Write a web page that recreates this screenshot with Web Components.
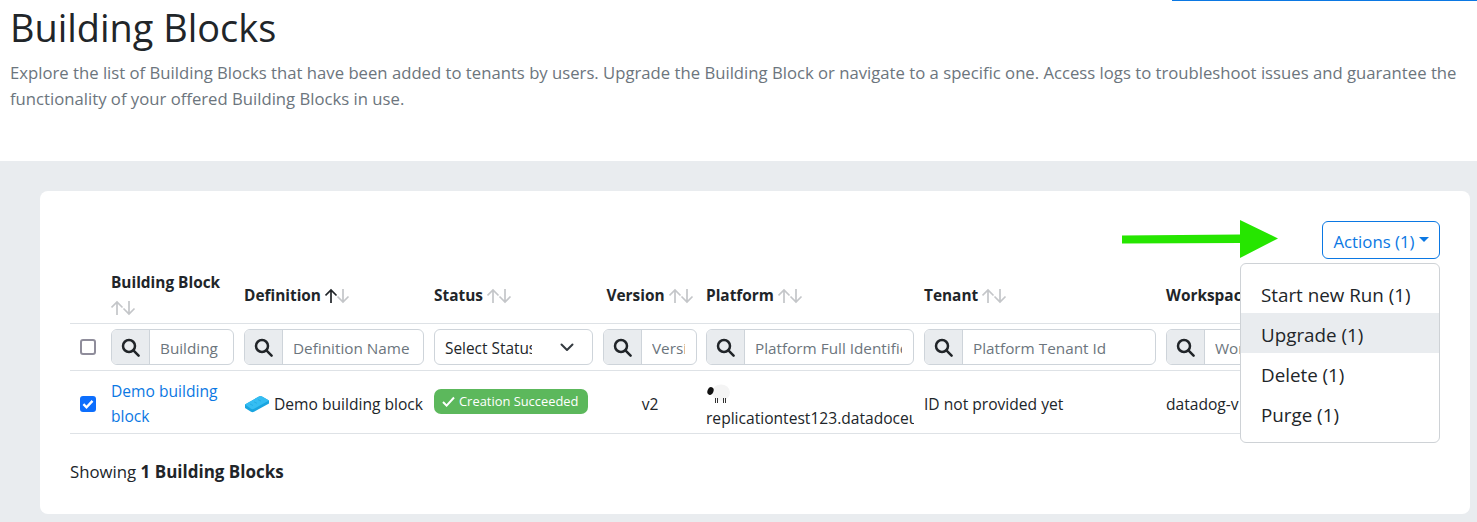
<!DOCTYPE html>
<html>
<head>
<meta charset="utf-8">
<title>Building Blocks</title>
<style>
  html, body { margin: 0; height: 100%; background: #fff; overflow: hidden; }
  body { font-family: "Open Sans", "Noto Sans", sans-serif; color: #212529; }
</style>
</head>
<body>
<page-head
  title="Building Blocks"
  text="Explore the list of Building Blocks that have been added to tenants by users. Upgrade the Building Block or navigate to a specific one. Access logs to troubleshoot issues and guarantee the functionality of your offered Building Blocks in use."></page-head>
<page-body>
  <blocks-card></blocks-card>
</page-body>

<script>
const SEARCH_ICON = `<svg width="19" height="19" viewBox="0 0 19 19" fill="none" stroke="#212529" stroke-width="2.5"><circle cx="8" cy="8" r="6"/><path d="M12.4 12.4l5.2 5.2" stroke-linecap="round"/></svg>`;

class PageHead extends HTMLElement {
  connectedCallback() {
    const shadow = this.attachShadow({ mode: "open" });
    shadow.innerHTML = `
    <style>
      :host { display: block; height: 161px; padding-left: 10px; position: relative; overflow: hidden; }
      h1 { margin: 0; padding-top: 3px; font-size: 37.9px; line-height: 48px; font-weight: 400; }
      p { margin: 9px 0 0; font-size: 16.7px; line-height: 26px; color: #6c757d; width: 1460px; }
      .topline { position: absolute; top: 0; right: 0; width: 305px; height: 1px; background: #0b78e3; }
    </style>
    <div class="topline"></div>
    <h1>${this.getAttribute("title")}</h1>
    <p>${this.getAttribute("text")}</p>`;
  }
}

class PageBody extends HTMLElement {
  connectedCallback() {
    const shadow = this.attachShadow({ mode: "open" });
    shadow.innerHTML = `
    <style>
      :host { display: block; background: #e9ecef; padding: 30px 7px 8px 40px; }
    </style>
    <slot></slot>`;
  }
}

class SortArrows extends HTMLElement {
  connectedCallback() {
    const active = this.hasAttribute("active");
    const shadow = this.attachShadow({ mode: "open" });
    shadow.innerHTML = `
    <style>
      :host { display: inline-block; width: 25px; height: 16px; vertical-align: -3px; }
      svg { display: block; }
    </style>
    <svg width="25" height="16" viewBox="0 0 25 16" fill="none" stroke-width="1.7">
      <path d="M6 15V2M.5 7.500L6 2l5.500 5.500" stroke="${active ? "#212529" : "#c4c6c9"}"/>
      <path d="M18 1v13M12.500 8.500L18 14l5.500-5.500" stroke="#c4c6c9"/>
    </svg>`;
  }
}

class SearchBox extends HTMLElement {
  connectedCallback() {
    const shadow = this.attachShadow({ mode: "open" });
    shadow.innerHTML = `
    <style>
      :host { display: flex; height: 36px; box-sizing: border-box; border: 1px solid #ced4da; border-radius: 6px; overflow: hidden; background: #fff; }
      .addon { flex: 0 0 38px; display: flex; align-items: center; justify-content: center; background: #e9ecef; border-right: 1px solid #ced4da; box-sizing: border-box; }
      input { flex: 1; min-width: 0; border: 0; outline: 0; padding: 2px 0 0 10px; margin-right: 11px; font: inherit; font-size: 15.3px; background: transparent; color: #212529; }
      input::placeholder { color: #6c757d; opacity: 1; }
    </style>
    <div class="addon">${SEARCH_ICON}</div>
    <input type="text" placeholder="${this.getAttribute("placeholder")}">`;
  }
}

class StatusSelect extends HTMLElement {
  connectedCallback() {
    const shadow = this.attachShadow({ mode: "open" });
    shadow.innerHTML = `
    <style>
      :host { display: flex; align-items: center; height: 36px; box-sizing: border-box; border: 1px solid #ced4da; border-radius: 6px; padding: 0 17px 0 10px; font-size: 15.4px; }
      span { flex: 1; overflow: hidden; white-space: nowrap; margin-right: 27px; padding-top: 2px; }
      svg { flex: none; }
    </style>
    <span>Select Status</span>
    <svg width="16" height="16" viewBox="0 0 16 16" fill="none" stroke="#343a40" stroke-width="2" stroke-linecap="round" stroke-linejoin="round"><path d="M2.500 5.500L8 11l5.500-5.500"/></svg>`;
  }
}

class StatusBadge extends HTMLElement {
  connectedCallback() {
    const shadow = this.attachShadow({ mode: "open" });
    shadow.innerHTML = `
    <style>
      :host { display: flex; align-items: center; gap: 4px; width: 154px; box-sizing: border-box; height: 25px; padding: 0 8px; border-radius: 7px; background: #5cb85c; color: #fff; font-size: 12.9px; line-height: 25px; white-space: nowrap; }
      svg { flex: none; }
    </style>
    <svg width="13" height="11" viewBox="0 0 13 11" fill="none" stroke="#fff" stroke-width="2"><path d="M1 6l3.600 3.600L12 1.500"/></svg>
    <slot></slot>`;
  }
}

class CheckMark extends HTMLElement {
  connectedCallback() {
    const on = this.hasAttribute("checked");
    const shadow = this.attachShadow({ mode: "open" });
    shadow.innerHTML = `
    <style>
      :host { display: block; width: 16px; height: 16px; box-sizing: border-box; border-radius: 3px;
        border: ${on ? "0" : "2px solid #8f8d9b"}; background: ${on ? "#0d6efd" : "#fff"}; }
      svg { display: block; }
    </style>
    ${on ? `<svg width="16" height="16" viewBox="0 0 16 16" fill="none" stroke="#fff" stroke-width="2.4"><path d="M3.400 8.200l3.100 3.100 6-6.400"/></svg>` : ""}`;
  }
}

class ActionsMenu extends HTMLElement {
  connectedCallback() {
    const shadow = this.attachShadow({ mode: "open" });
    shadow.innerHTML = `
    <style>
      :host { display: block; width: 118px; height: 38px; position: relative; font-size: 16.8px; }
      button { width: 118px; height: 38px; box-sizing: border-box; border: 1px solid #0b78e3; border-radius: 6px; background: #fff; color: #0b78e3; font: inherit; padding: 2px 0 0; display: flex; align-items: center; justify-content: center; gap: 4px; }
      .caret { width: 0; height: 0; border-top: 5px solid #0b78e3; border-left: 5px solid transparent; border-right: 5px solid transparent; margin-top: -4px; }
      ul { position: absolute; top: 42px; right: 0; width: 200px; box-sizing: border-box; margin: 0; padding: 9px 0 9px; list-style: none; background: #fff; border: 1px solid #ced2d6; border-radius: 6px; color: #212529; font-size: 18.8px; }
      li { height: 40px; line-height: 44px; padding-left: 20px; }
      li.hover { background: #e9ecef; }
    </style>
    <button>Actions (1)<span class="caret"></span></button>
    <ul>
      <li>Start new Run (1)</li>
      <li class="hover">Upgrade (1)</li>
      <li>Delete (1)</li>
      <li>Purge (1)</li>
    </ul>`;
  }
}

class GreenArrow extends HTMLElement {
  connectedCallback() {
    const shadow = this.attachShadow({ mode: "open" });
    shadow.innerHTML = `
    <style>
      :host { position: absolute; left: 1082px; top: 29px; display: block; width: 156px; height: 38px; }
      svg { display: block; }
    </style>
    <svg width="156" height="38" viewBox="0 0 156 38"><path d="M0 15.500L118 14.600V0L156 18.500 118 38V23L0 23.500z" fill="#26e600"/></svg>`;
  }
}

class BlocksTable extends HTMLElement {
  connectedCallback() {
    const shadow = this.attachShadow({ mode: "open" });
    shadow.innerHTML = `
    <style>
      :host { display: block; }
      table { table-layout: fixed; border-collapse: collapse; width: 1370px; font-size: 15.6px; }
      th, td { padding: 5px; border-bottom: 1px solid #dee2e6; vertical-align: middle; text-align: left; overflow: hidden; box-sizing: border-box; }
      th { font-weight: 700; font-size: 15.4px; line-height: 25px; padding-top: 7px; padding-bottom: 3px; }
      .rows td { height: 63px; line-height: 25px; padding-top: 8px; padding-bottom: 4px; }
      .rows td.top { vertical-align: top; padding-bottom: 2px; }
      .rows td.badge { padding-top: 18px; }
      .rows td.plat { padding-top: 13px; }
      .check { padding-left: 10px; }
      .center { text-align: center; }
      .p4 { padding-left: 4px; }
      a { color: #0b78e3; text-decoration: none; }
      .def { display: flex; align-items: center; gap: 4px; white-space: nowrap; }
      .platform { white-space: nowrap; overflow: hidden; }
      .platform svg { display: block; }
      .nowrap { white-space: nowrap; }
    </style>
    <table>
      <colgroup>
        <col style="width:36px"><col style="width:133px"><col style="width:190px"><col style="width:169px">
        <col style="width:104px"><col style="width:217px"><col style="width:242px"><col style="width:279px">
      </colgroup>
      <tr>
        <th></th>
        <th>Building Block <sort-arrows></sort-arrows></th>
        <th class="nowrap">Definition <sort-arrows active></sort-arrows></th>
        <th class="nowrap">Status <sort-arrows></sort-arrows></th>
        <th class="center nowrap">Version <sort-arrows></sort-arrows></th>
        <th class="p4 nowrap">Platform <sort-arrows></sort-arrows></th>
        <th class="nowrap">Tenant <sort-arrows></sort-arrows></th>
        <th class="nowrap">Workspace <sort-arrows></sort-arrows></th>
      </tr>
      <tr class="filters">
        <td class="check"><check-mark></check-mark></td>
        <td><search-box placeholder="Building Block"></search-box></td>
        <td><search-box placeholder="Definition Name"></search-box></td>
        <td><status-select></status-select></td>
        <td><search-box placeholder="Version"></search-box></td>
        <td class="p4"><search-box placeholder="Platform Full Identifier"></search-box></td>
        <td><search-box placeholder="Platform Tenant Id"></search-box></td>
        <td><search-box placeholder="Workspace"></search-box></td>
      </tr>
      <tr class="rows">
        <td class="check"><check-mark checked></check-mark></td>
        <td><a href="#">Demo building block</a></td>
        <td><div class="def">
          <svg width="26" height="18" viewBox="0 0 26 18" style="flex:none">
            <path d="M1 9.500L15 1.500c1-.5 2-.5 3 0L25 5.500v3L10 16.800c-1 .5-2 .5-3 0L1 13z" fill="#19a5e0"/>
            <path d="M1 9.500L15 1.500c1-.5 2-.5 3 0L25 5.500 10 13.800c-1 .5-2 .5-3 0z" fill="#35bdf2"/>
            <path d="M6 9l3 1.500M10 6.800l3 1.500M14 4.600l3 1.500" stroke="#25aee6" stroke-width="1"/>
          </svg>
          <span>Demo building block</span></div></td>
        <td class="top badge"><status-badge>Creation Succeeded</status-badge></td>
        <td class="center">v2</td>
        <td class="p4 top plat"><div class="platform">
          <svg width="24" height="22" viewBox="0 0 24 22">
            <ellipse cx="15" cy="8.500" rx="9" ry="8" fill="#f4f4f4"/>
            <ellipse cx="4.500" cy="7" rx="3" ry="4" fill="#111" transform="rotate(20 4.500 7)"/>
            <path d="M9.500 14v5M11.500 14v5M17.500 14v5M19.500 14v5" stroke="#333" stroke-width="1"/>
          </svg>
          replicationtest123.datadoceu</div></td>
        <td class="nowrap">ID not provided yet</td>
        <td class="nowrap">datadog-v</td>
      </tr>
    </table>`;
  }
}

class BlocksCard extends HTMLElement {
  connectedCallback() {
    const shadow = this.attachShadow({ mode: "open" });
    shadow.innerHTML = `
    <style>
      :host { display: block; position: relative; background: #fff; border-radius: 8px; padding: 30px; height: 323px; box-sizing: border-box; }
      .tools { display: flex; justify-content: flex-end; margin-bottom: 4px; position: relative; z-index: 2; }
      .count { margin-top: 26px; font-size: 16.8px; line-height: 24px; }
      b { font-size: 17px; }
    </style>
    <green-arrow></green-arrow>
    <div class="tools"><actions-menu></actions-menu></div>
    <blocks-table></blocks-table>
    <div class="count">Showing <b>1 Building Blocks</b></div>`;
  }
}

customElements.define("page-head", PageHead);
customElements.define("page-body", PageBody);
customElements.define("sort-arrows", SortArrows);
customElements.define("search-box", SearchBox);
customElements.define("status-select", StatusSelect);
customElements.define("status-badge", StatusBadge);
customElements.define("check-mark", CheckMark);
customElements.define("actions-menu", ActionsMenu);
customElements.define("green-arrow", GreenArrow);
customElements.define("blocks-table", BlocksTable);
customElements.define("blocks-card", BlocksCard);
</script>
</body>
</html>
